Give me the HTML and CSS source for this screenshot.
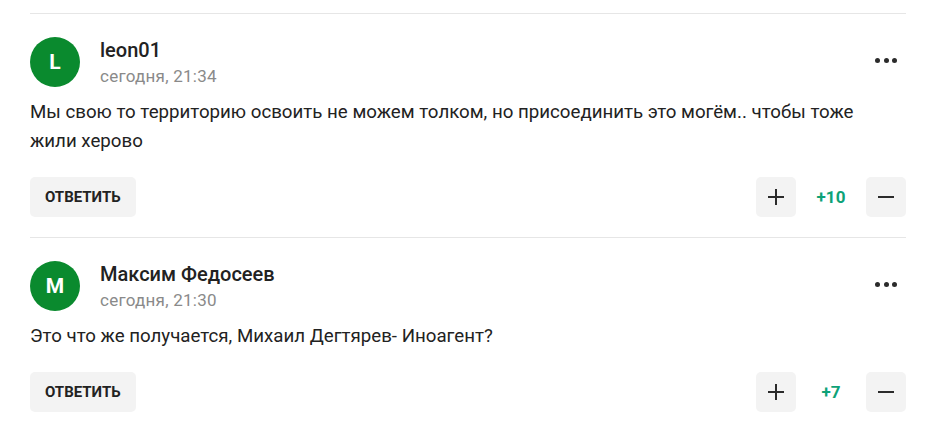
FILE: index.html
```html
<!DOCTYPE html>
<html lang="ru">
<head>
<meta charset="utf-8">
<link rel="stylesheet" href="styles.css">
</head>
<body>
<div class="comments">
  <div class="comment">
    <div class="head">
      <div class="avatar">L</div>
      <div class="meta">
        <div class="name">leon01</div>
        <div class="date">сегодня, 21:34</div>
      </div>
      <button class="more" aria-label="Ещё"><span></span><span></span><span></span></button>
    </div>
    <p class="text">Мы свою то территорию освоить не можем толком, но присоединить это могём.. чтобы тоже жили херово</p>
    <div class="actions">
      <button class="reply">Ответить</button>
      <div class="votes">
        <button class="vote plus" aria-label="Плюс"></button>
        <span class="count">+10</span>
        <button class="vote minus" aria-label="Минус"></button>
      </div>
    </div>
  </div>
  <div class="comment">
    <div class="head">
      <div class="avatar">M</div>
      <div class="meta">
        <div class="name">Максим Федосеев</div>
        <div class="date">сегодня, 21:30</div>
      </div>
      <button class="more" aria-label="Ещё"><span></span><span></span><span></span></button>
    </div>
    <p class="text">Это что же получается, Михаил Дегтярев- Иноагент?</p>
    <div class="actions">
      <button class="reply">Ответить</button>
      <div class="votes">
        <button class="vote plus" aria-label="Плюс"></button>
        <span class="count">+7</span>
        <button class="vote minus" aria-label="Минус"></button>
      </div>
    </div>
  </div>
</div>
</body>
</html>
```
FILE: styles.css
```css
html, body {
  margin: 0;
  padding: 0;
  background: #fff;
}
body {
  font-family: Roboto, "Liberation Sans", Arial, sans-serif;
  color: #222;
}
.comments {
  padding: 13px 25px 0 30px;
}
.comment {
  border-top: 1px solid #e6e6e6;
  padding: 23px 0 20px;
}
.head {
  display: flex;
  align-items: flex-start;
}
.avatar {
  width: 50px;
  height: 50px;
  border-radius: 50%;
  background: #0a8a2e;
  color: #fff;
  font-weight: 700;
  font-size: 21px;
  display: flex;
  align-items: center;
  justify-content: center;
  flex-shrink: 0;
}
.meta {
  margin-left: 20px;
  padding-top: 1px;
  flex: 1;
}
.name {
  font-size: 20px;
  font-weight: 500;
  line-height: 24px;
  color: #222;
}
.date {
  font-size: 17px;
  letter-spacing: 0.25px;
  line-height: 24px;
  margin-top: 2px;
  color: #8a8a8a;
}
.more {
  width: 40px;
  height: 40px;
  margin-top: 3px;
  border: 0;
  background: transparent;
  padding: 0;
  display: flex;
  align-items: center;
  justify-content: center;
  gap: 3.5px;
  cursor: pointer;
}
.more span {
  width: 5px;
  height: 5px;
  border-radius: 50%;
  background: #2b2b2b;
}
.text {
  margin: 10px 40px 0 0;
  font-size: 18.7px;
  line-height: 29px;
  color: #222;
}
.actions {
  margin-top: 21px;
  display: flex;
  justify-content: space-between;
  align-items: center;
}
.reply {
  height: 40px;
  padding: 0 15px;
  border: 0;
  border-radius: 5px;
  background: #f3f3f3;
  font-family: inherit;
  font-size: 15px;
  font-weight: 700;
  text-transform: uppercase;
  color: #222;
  cursor: pointer;
}
.votes {
  display: flex;
  align-items: center;
}
.vote {
  position: relative;
  width: 40px;
  height: 40px;
  border: 0;
  border-radius: 5px;
  background: #f3f3f3;
  padding: 0;
  cursor: pointer;
}
.vote::before,
.vote.plus::after {
  content: "";
  position: absolute;
  left: 12px;
  top: 19px;
  width: 16px;
  height: 2px;
  background: #2b2b2b;
}
.vote.plus::after {
  left: 19px;
  top: 12px;
  width: 2px;
  height: 16px;
}
.count {
  width: 70px;
  text-align: center;
  font-size: 17px;
  font-weight: 700;
  color: #0ea277;
}
```
